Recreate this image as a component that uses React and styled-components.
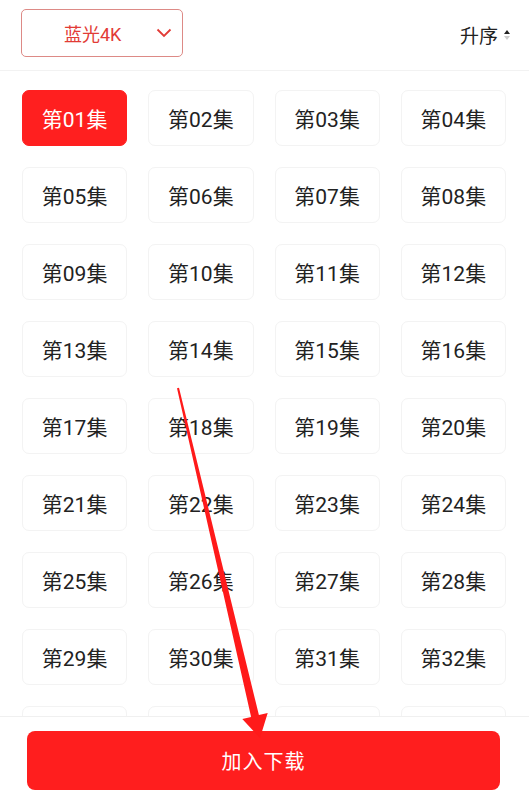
import React from 'react';
import styled, { createGlobalStyle } from 'styled-components';

const GlobalStyle = createGlobalStyle`
    html, body {
        margin: 0;
        padding: 0;
        background: #fff;
    }
    body {
        font-family: Roboto, 'Noto Sans CJK SC', sans-serif;
    }
`;

const Page = styled.div`
    position: relative;
    width: 529px;
    height: 793px;
    display: flex;
    flex-direction: column;
    overflow: hidden;
    background: #fff;
`;

const Header = styled.div`
    height: 71px;
    box-sizing: border-box;
    display: flex;
    align-items: flex-start;
    justify-content: space-between;
    padding: 9px 19px 0 21px;
    border-bottom: 1px solid #f2f2f2;
`;

const Dropdown = styled.div`
    width: 162px;
    height: 48px;
    box-sizing: border-box;
    border: 1.5px solid #dd8a86;
    border-radius: 5px;
    display: flex;
    align-items: center;
    padding: 0 10px 0 42px;
    justify-content: space-between;
    color: #e23b36;
    font-size: 18px;
`;

const SortButton = styled.div`
    display: flex;
    align-items: center;
    gap: 6px;
    margin-top: 12px;
    font-size: 19px;
    color: #222;
`;

const SortIcon = styled.div`
    display: flex;
    flex-direction: column;
    gap: 2px;
`;

const Triangle = styled.span`
    width: 0;
    height: 0;
    border-left: 3.5px solid transparent;
    border-right: 3.5px solid transparent;
    ${p => (p.$down
        ? `border-top: 4px solid #ccc;`
        : `border-bottom: 4px solid #222;`)}
`;

const GridArea = styled.div`
    flex: 1;
    overflow: hidden;
    padding: 19px 23px 0 22px;
`;

const Grid = styled.div`
    display: grid;
    grid-template-columns: repeat(4, 1fr);
    grid-auto-rows: 56px;
    column-gap: 21px;
    row-gap: 21px;
`;

const Cell = styled.div`
    border-radius: 7px;
    border: 1px solid ${p => (p.$active ? '#ff1f1f' : '#f3f3f3')};
    background: ${p => (p.$active ? '#ff1f1f' : '#fff')};
    color: ${p => (p.$active ? '#fff' : '#222')};
    display: flex;
    align-items: center;
    justify-content: center;
    font-size: 21px;
`;

const Footer = styled.div`
    border-top: 1px solid #f0f0f0;
    padding: 14px 29px 3px 27px;
    background: #fff;
`;

const DownloadButton = styled.div`
    height: 59px;
    border-radius: 8px;
    background: #ff1e1e;
    color: #fff;
    font-size: 20px;
    letter-spacing: 1px;
    display: flex;
    align-items: center;
    justify-content: center;
`;

const Annotation = styled.svg`
    position: absolute;
    left: 0;
    top: 0;
    pointer-events: none;
`;

const episodes = Array.from({ length: 36 }, (_, i) => `第${String(i + 1).padStart(2, '0')}集`);

const App = () => (
    <Page>
        <GlobalStyle />
        <Header>
            <Dropdown>
                <span>蓝光4K</span>
                <svg width="16" height="10" viewBox="0 0 16 10">
                    <path d="M1.5 1.5 L8 8 L14.5 1.5" fill="none" stroke="#e23b36" strokeWidth="1.8" />
                </svg>
            </Dropdown>
            <SortButton>
                <span>升序</span>
                <SortIcon>
                    <Triangle />
                    <Triangle $down />
                </SortIcon>
            </SortButton>
        </Header>
        <GridArea>
            <Grid>
                {episodes.map((ep, i) => (
                    <Cell key={ep} $active={i === 0}>{ep}</Cell>
                ))}
            </Grid>
        </GridArea>
        <Footer>
            <DownloadButton>加入下载</DownloadButton>
        </Footer>
        {/* red arrow drawn over the page */}
        <Annotation width="529" height="793" viewBox="0 0 529 793">
            <polygon
                points="177,388.2 179,387.8 258.9,715.1 267.7,713 260,738 242.3,719 251.1,716.9"
                fill="#ff1a1a"
            />
        </Annotation>
    </Page>
);

export default App;
